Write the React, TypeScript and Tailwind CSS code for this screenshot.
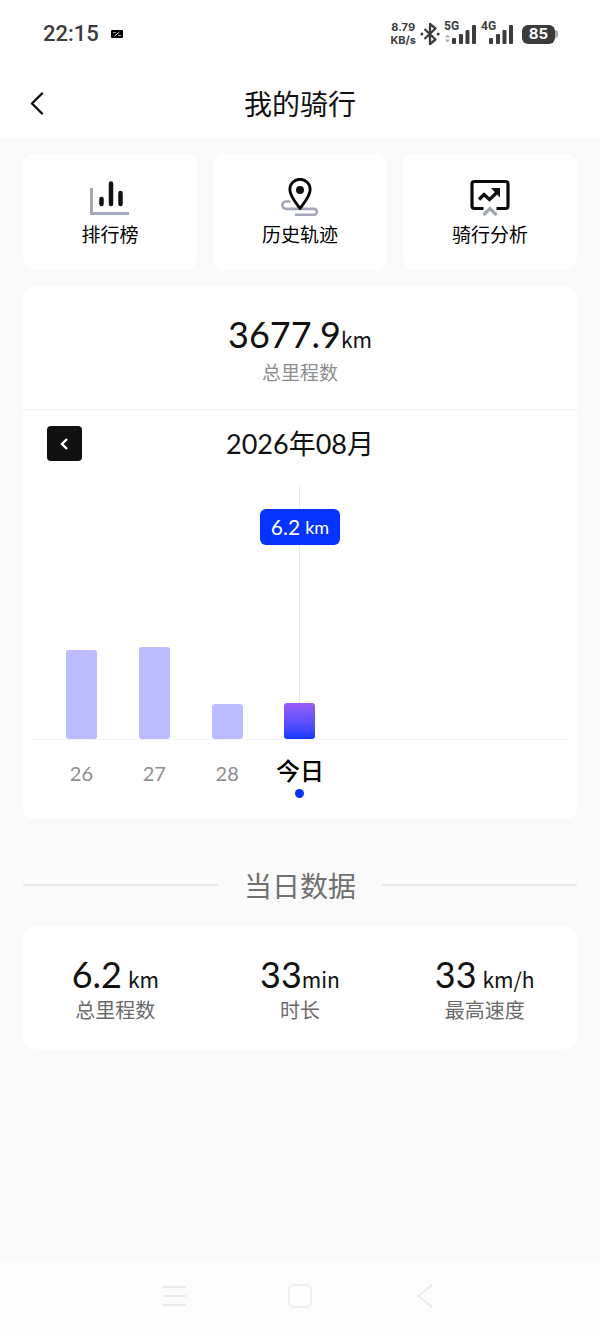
import { useState } from "react";

const shortcuts = [
  { label: "排行榜", icon: RankIcon },
  { label: "历史轨迹", icon: TrackIcon },
  { label: "骑行分析", icon: AnalysisIcon },
];

const days = [
  { label: "26", height: 89, km: "15.3" },
  { label: "27", height: 92, km: "15.8" },
  { label: "28", height: 35, km: "6.0" },
  { label: "今日", height: 36, km: "6.2" },
];

const stats = [
  { value: "6.2", unit: "km", label: "总里程数", spaced: true },
  { value: "33", unit: "min", label: "时长", spaced: false },
  { value: "33", unit: "km/h", label: "最高速度", spaced: true },
];

function RankIcon() {
  return (
    <svg width="40" height="40" viewBox="0 0 40 40" fill="none" aria-hidden="true">
      <path d="M1.500 10v25.500H39" stroke="#a3a8ba" strokeWidth="3" />
      <path d="M11.500 21v5M21 5.500v20.500M30.500 15v11" stroke="#111" strokeWidth="4.500" strokeLinecap="round" />
    </svg>
  );
}

function TrackIcon() {
  return (
    <svg width="40" height="40" viewBox="0 0 40 40" fill="none" aria-hidden="true">
      <path
        d="M10.500 23.500H6a3.700 3.700 0 0 0 0 7.400h28a2.900 2.900 0 0 1 0 5.800H15"
        stroke="#a3a8ba"
        strokeWidth="2.600"
      />
      <path
        d="M20 30.500C16 25 9.800 18 9.800 11.500a10.200 10.200 0 0 1 20.400 0C30.200 18 24 25 20 30.500Z"
        fill="#fff"
        stroke="#000"
        strokeWidth="2.800"
        strokeLinejoin="round"
      />
      <circle cx="20" cy="12" r="4" fill="#111" />
    </svg>
  );
}

function AnalysisIcon() {
  return (
    <svg width="40" height="40" viewBox="0 0 40 40" fill="none" aria-hidden="true">
      <path
        d="M13.500 30.500H4.500a2.500 2.500 0 0 1-2.500-2.500V6a2.500 2.500 0 0 1 2.500-2.500h31A2.500 2.500 0 0 1 38 6v22a2.500 2.500 0 0 1-2.500 2.500h-9"
        stroke="#0a0a0a"
        strokeWidth="3.200"
      />
      <path d="M9 21.500l5-5 5.500 5 8-7.500" stroke="#111" strokeWidth="3.400" />
      <path d="M21 10h9v9.500z" fill="#111" />
      <path d="M13.500 37l6.500-6.500 6.500 6.500" stroke="#a3a8b3" strokeWidth="3.200" />
    </svg>
  );
}

function Signal({ name, data }: { name: string; data?: boolean }) {
  return (
    <div className="relative">
      <span className="absolute -top-1 left-0 font-['Roboto',sans-serif] text-xs leading-4 font-bold">
        {name}
      </span>
      <svg width="33" height="24" viewBox="0 0 33 24" fill="#3c3c3c" aria-hidden="true">
        {data && <path d="M1 15.500l2.500-3 2.500 3zM1 17.500l2.500 3 2.500-3z" fill="#aaa" />}
        <rect x="8" y="16" width="4" height="6" rx="1" />
        <rect x="15" y="12" width="4" height="10" rx="1" />
        <rect x="21.500" y="8" width="4" height="14" rx="1" />
        <rect x="28" y="3" width="4" height="19" rx="1" />
      </svg>
    </div>
  );
}

function StatusBar() {
  return (
    <div className="flex h-[68px] items-center bg-white pr-[42px] pl-[43px] font-['Inter','Noto_Sans_CJK_SC',sans-serif] text-[#3c3c3c]">
      <span className="font-['Roboto',sans-serif] text-[22px] leading-7 font-medium">22:15</span>
      <svg className="ml-3" width="12" height="8" viewBox="0 0 12 8" aria-hidden="true">
        <rect width="12" height="8" rx="1" fill="#000" />
        <path d="M3.500 6l5-4" stroke="#ddd" />
        <path d="M7 5.500h3M2 2.500h3" stroke="#999" />
      </svg>
      <div className="ml-auto flex items-center">
        <div className="mr-1 text-center text-[11px] leading-[13px] font-bold">
          <div>8.79</div>
          <div>KB/s</div>
        </div>
        <svg className="mr-1" width="20" height="24" viewBox="0 0 20 24" fill="none" aria-hidden="true">
          <path d="M4.500 7l11 10.500L10 22V2l5.500 4.500-11 10.500" stroke="#3c3c3c" strokeWidth="2.300" strokeLinejoin="round" />
          <circle cx="1.800" cy="12" r="1.500" fill="#3c3c3c" />
          <circle cx="18.200" cy="12" r="1.500" fill="#3c3c3c" />
        </svg>
        <Signal name="5G" data />
        <div className="ml-1">
          <Signal name="4G" />
        </div>
        <div className="ml-2 flex items-center">
          <span className="flex h-[19px] w-[33px] items-center justify-center rounded-md bg-[#3c3c3c] text-[15px] leading-5 font-bold text-white">
            85
          </span>
          <span className="h-2 w-[3px] rounded-r-full bg-[#aaa]" />
        </div>
      </div>
    </div>
  );
}

function MonthChart() {
  const [selected, setSelected] = useState(3);

  return (
    <div className="px-2">
      <div className="grid h-[255px] grid-cols-7 border-b border-[#f3f3f3] px-[14px]">
        {days.map((day, i) => (
          <button
            key={day.label}
            onClick={() => setSelected(i)}
            aria-label={`${day.label} ${day.km} km`}
            className="relative flex flex-col items-center justify-end"
          >
            {i === selected && (
              <>
                <span className="w-px flex-1 bg-[#e6ebee]" />
                <span className="absolute top-6 flex h-9 w-20 items-center justify-center gap-[5px] rounded-md bg-[#0433ff] font-['Lato',sans-serif] text-white">
                  <span className="text-[21px] leading-6">{day.km}</span>
                  <span className="text-lg leading-6">km</span>
                </span>
              </>
            )}
            <span
              className={`w-[31px] rounded-[3px] ${i === selected ? "bg-linear-to-b from-[#9b5cf6] to-[#0a38ff]" : "bg-[#bbbcff]"}`}
              style={{ height: day.height }}
            />
          </button>
        ))}
      </div>
      <div className="grid h-[79px] grid-cols-7 px-[14px] pt-[15px] text-center font-['Lato','Noto_Sans_CJK_SC',sans-serif]">
        {days.map((day, i) => (
          <div key={day.label} className="flex flex-col items-center">
            <span
              className={`leading-8 whitespace-nowrap ${i === 3 ? "text-2xl font-medium text-black" : "pt-[2px] text-xl text-[#8e8e8e]"}`}
            >
              {day.label}
            </span>
            {i === selected && <span className="mt-[2px] size-[9px] rounded-full bg-[#0433ff]" />}
          </div>
        ))}
      </div>
    </div>
  );
}

export default function App() {
  return (
    <div className="flex min-h-screen flex-col bg-[#fafafa] font-['Noto_Sans_CJK_SC',sans-serif] text-[#111]">
      <StatusBar />
      <header className="grid h-[70px] grid-cols-[1fr_auto_1fr] items-center bg-white px-[23px]">
        <button aria-label="返回" className="flex size-7 items-center justify-center">
          <svg width="16" height="24" viewBox="0 0 16 24" fill="none" aria-hidden="true">
            <path d="M13 2.500L3 12.500l10 10" stroke="#111" strokeWidth="2.400" strokeLinecap="round" strokeLinejoin="round" />
          </svg>
        </button>
        <h1 className="text-[28px] leading-10">我的骑行</h1>
      </header>

      <main className="px-[23px] pt-[15px]">
        <nav className="grid grid-cols-3 gap-4">
          {shortcuts.map(({ label, icon: Icon }) => (
            <a
              key={label}
              href="#"
              className="flex h-[117px] flex-col items-center rounded-xl bg-white pt-[25px] text-[19px] leading-8 text-black"
            >
              <Icon />
              {label}
            </a>
          ))}
        </nav>

        <section className="mt-4 rounded-xl bg-white">
          <div className="flex h-[124px] flex-col items-center border-b border-[#f3f3f3] pt-6">
            <div className="flex h-12 items-baseline leading-[48px]">
              <span className="font-['Lato',sans-serif] text-4xl leading-[48px]">3677.9</span>
              <span className="text-[21px] leading-[48px]">km</span>
            </div>
            <div className="text-[19px] leading-7 text-[#8e8e8e]">总里程数</div>
          </div>
          <div className="grid grid-cols-[1fr_auto_1fr] items-center px-6 pt-4 pb-6">
            <button
              aria-label="上个月"
              className="flex size-[35px] items-center justify-center rounded bg-[#111]"
            >
              <svg width="10" height="14" viewBox="0 0 10 14" fill="none" aria-hidden="true">
                <path d="M7 2L2 7l5 5" stroke="#fff" strokeWidth="2.400" />
              </svg>
            </button>
            <h2 className="font-['Lato','Noto_Sans_CJK_SC',sans-serif] text-[27px] leading-[35px]">2026年08月</h2>
          </div>
          <MonthChart />
        </section>

        <div className="mt-[46px] flex items-center gap-[26px]">
          <span className="h-[2px] flex-1 bg-[#e8e8e8]" />
          <h2 className="text-[28px] leading-10 text-[#707070]">当日数据</h2>
          <span className="h-[2px] flex-1 bg-[#e8e8e8]" />
        </div>

        <section className="mt-[21px] grid h-[123px] grid-cols-3 rounded-xl bg-white pt-7 text-center">
          {stats.map((stat) => (
            <div key={stat.label}>
              <div className={`flex h-10 items-baseline justify-center ${stat.spaced ? "gap-[6px]" : ""}`}>
                <span className="font-['Lato',sans-serif] text-4xl leading-10">{stat.value}</span>
                <span className="text-[21px] leading-10">{stat.unit}</span>
              </div>
              <div className="text-xl leading-8 text-[#6b6b6b]">{stat.label}</div>
            </div>
          ))}
        </section>
      </main>

      <footer className="mt-auto flex h-[74px] items-center justify-center gap-[101px] bg-[#fdfdfd]">
        <button aria-label="菜单">
          <svg width="24" height="24" viewBox="0 0 24 24" fill="none" stroke="#ebebeb" strokeWidth="2" aria-hidden="true">
            <path d="M0 3h23M0 12h23M0 21h23" />
          </svg>
        </button>
        <button aria-label="主页">
          <svg width="24" height="24" viewBox="0 0 24 24" fill="none" stroke="#eeeeee" strokeWidth="2" aria-hidden="true">
            <rect x="1" y="1" width="22" height="22" rx="5" />
          </svg>
        </button>
        <button aria-label="后退">
          <svg width="24" height="24" viewBox="0 0 24 24" fill="none" stroke="#ebebeb" strokeWidth="2" aria-hidden="true">
            <path d="M19 1L5 12l14 11" />
          </svg>
        </button>
      </footer>
    </div>
  );
}
